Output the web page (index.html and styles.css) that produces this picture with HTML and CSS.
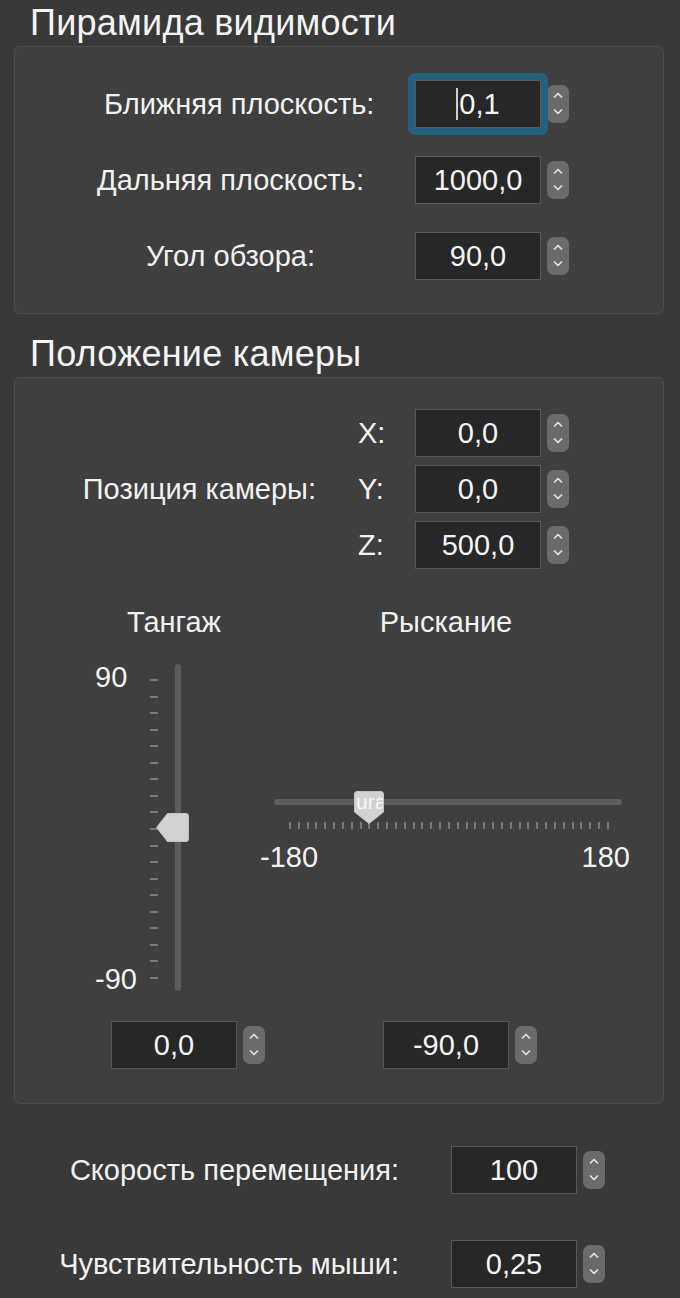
FILE: index.html
```html
<!DOCTYPE html>
<html lang="ru">
<head>
<meta charset="utf-8">
<title>Камера</title>
<link rel="stylesheet" href="styles.css">
</head>
<body>
<main class="panel">
  <h2 class="group-title first">Пирамида видимости</h2>
  <section class="group frustum">
    <label class="form-label near">Ближняя плоскость:</label>
    <div class="spin">
      <div class="field focused"><span class="caret"></span>0,1</div>
      <svg class="stepper" viewBox="0 0 22 38"><path d="M7.5 12 L11 8.5 L14.5 12 M7.5 25 L11 28.5 L14.5 25"/></svg>
    </div>
    <label class="form-label">Дальняя плоскость:</label>
    <div class="spin">
      <div class="field">1000,0</div>
      <svg class="stepper" viewBox="0 0 22 38"><path d="M7.5 12 L11 8.5 L14.5 12 M7.5 25 L11 28.5 L14.5 25"/></svg>
    </div>
    <label class="form-label">Угол обзора:</label>
    <div class="spin">
      <div class="field">90,0</div>
      <svg class="stepper" viewBox="0 0 22 38"><path d="M7.5 12 L11 8.5 L14.5 12 M7.5 25 L11 28.5 L14.5 25"/></svg>
    </div>
  </section>

  <h2 class="group-title second">Положение камеры</h2>
  <section class="group camera">
    <div class="position">
      <label class="form-label pos-label">Позиция камеры:</label>
      <span class="axis">X:</span>
      <div class="spin">
        <div class="field">0,0</div>
        <svg class="stepper" viewBox="0 0 22 38"><path d="M7.5 12 L11 8.5 L14.5 12 M7.5 25 L11 28.5 L14.5 25"/></svg>
      </div>
      <span class="axis">Y:</span>
      <div class="spin">
        <div class="field">0,0</div>
        <svg class="stepper" viewBox="0 0 22 38"><path d="M7.5 12 L11 8.5 L14.5 12 M7.5 25 L11 28.5 L14.5 25"/></svg>
      </div>
      <span class="axis">Z:</span>
      <div class="spin">
        <div class="field">500,0</div>
        <svg class="stepper" viewBox="0 0 22 38"><path d="M7.5 12 L11 8.5 L14.5 12 M7.5 25 L11 28.5 L14.5 25"/></svg>
      </div>
    </div>

    <div class="angles">
      <div class="angle-title">Тангаж</div>
      <div class="angle-title">Рыскание</div>

      <div class="vslider">
        <div class="vlabels"><span>90</span><span>-90</span></div>
        <div class="vticks"></div>
        <div class="vtrack">
          <svg class="vhandle" viewBox="0 0 33 29"><path d="M0.5 14.5 L11.5 0.5 H30 Q32.5 0.5 32.5 3 V26 Q32.5 28.5 30 28.5 H11.5 Z"/></svg>
        </div>
      </div>

      <div class="hslider">
        <div class="htrack">
          <div class="hhandle">
            <svg viewBox="0 0 30 33"><path d="M0.5 3 Q0.5 0.5 3 0.5 H27 Q29.5 0.5 29.5 3 V21 L15 32.5 L0.5 21 Z"/></svg>
            <span class="ghost">ura</span>
          </div>
        </div>
        <div class="hticks"></div>
        <div class="hlabels"><span>-180</span><span>180</span></div>
      </div>

      <div class="spin angle-spin">
        <div class="field">0,0</div>
        <svg class="stepper" viewBox="0 0 22 38"><path d="M7.5 12 L11 8.5 L14.5 12 M7.5 25 L11 28.5 L14.5 25"/></svg>
      </div>
      <div class="spin angle-spin">
        <div class="field">-90,0</div>
        <svg class="stepper" viewBox="0 0 22 38"><path d="M7.5 12 L11 8.5 L14.5 12 M7.5 25 L11 28.5 L14.5 25"/></svg>
      </div>
    </div>
  </section>

  <section class="settings">
    <label class="form-label">Скорость перемещения:</label>
    <div class="spin">
      <div class="field">100</div>
      <svg class="stepper" viewBox="0 0 22 38"><path d="M7.5 12 L11 8.5 L14.5 12 M7.5 25 L11 28.5 L14.5 25"/></svg>
    </div>
    <label class="form-label">Чувствительность мыши:</label>
    <div class="spin">
      <div class="field">0,25</div>
      <svg class="stepper" viewBox="0 0 22 38"><path d="M7.5 12 L11 8.5 L14.5 12 M7.5 25 L11 28.5 L14.5 25"/></svg>
    </div>
  </section>
</main>
</body>
</html>
```

FILE: styles.css
```css
* { box-sizing: border-box; }

html, body {
  margin: 0;
  padding: 0;
  background: #393939;
}

body {
  width: 680px;
  height: 1298px;
  overflow: hidden;
  font-family: "Liberation Sans", Arial, sans-serif;
  font-size: 29px;
  color: #f2f2f2;
}

.panel {
  padding: 3px 16px 0 14px;
}

.group-title {
  margin: 0 0 3px 0;
  padding-left: 16px;
  font-size: 36px;
  letter-spacing: 0.25px;
  font-weight: normal;
  line-height: 40px;
  color: #f4f4f4;
}

.group-title.second {
  margin-top: 20px;
}

.group {
  width: 650px;
  background: #3f3f3f;
  border: 1px solid #4d4d4d;
  border-radius: 6px;
}

.form-label {
  justify-self: end;
  line-height: 32px;
  white-space: nowrap;
}

.spin {
  display: flex;
  align-items: center;
  gap: 6px;
}

.field {
  position: relative;
  width: 126px;
  height: 48px;
  background: #272727;
  border: 1px solid #585858;
  display: flex;
  align-items: center;
  justify-content: center;
  font-size: 29px;
  line-height: 32px;
  color: #f5f5f5;
}

.field.focused::before {
  content: "";
  position: absolute;
  inset: -8px;
  border: 7px solid #25607f;
  border-radius: 7px;
}

.caret {
  display: inline-block;
  width: 0;
  height: 32px;
  border-left: 2px solid #cfcfcf;
  margin-right: 1px;
}

.stepper {
  width: 22px;
  height: 38px;
  background: #6b6b6b;
  border-radius: 7px;
  flex: none;
}

.stepper path {
  fill: none;
  stroke: #e4e4e4;
  stroke-width: 1.7;
  stroke-linecap: round;
  stroke-linejoin: round;
}

.frustum {
  height: 268px;
  display: grid;
  grid-template-columns: 358px auto;
  column-gap: 42px;
  row-gap: 28px;
  align-items: center;
  align-content: start;
  padding-top: 33px;
}

.frustum .form-label {
  justify-self: stretch;
  text-align: center;
  padding-left: 73px;
}

.frustum .form-label.near {
  padding-left: 89px;
}

.camera {
  padding: 31px 0 34px 0;
}

.position {
  display: grid;
  grid-template-columns: 301px 99px auto;
  row-gap: 8px;
  align-items: center;
}

.pos-label {
  grid-row: 1 / span 3;
  grid-column: 1;
  align-self: center;
}

.axis {
  padding-left: 42px;
  line-height: 32px;
}

.angles {
  display: grid;
  grid-template-columns: 168px 352px;
  column-gap: 12px;
  margin: 39px 0 0 75px;
}

.angle-title {
  text-align: center;
  line-height: 28px;
  margin-bottom: 27px;
}

.vslider {
  display: flex;
  height: 330px;
  padding-left: 5px;
}

.vlabels {
  width: 55px;
  display: flex;
  flex-direction: column;
  justify-content: space-between;
  line-height: 28px;
}

.vticks {
  width: 8px;
  height: 300px;
  margin-top: 16px;
  background: repeating-linear-gradient(to bottom, #777 0 2px, transparent 2px 16.556px);
}

.vtrack {
  position: relative;
  width: 6px;
  height: 327px;
  margin: 1px 0 0 17px;
  background: #5d5d5d;
  border-radius: 3px;
}

.vhandle {
  position: absolute;
  left: -19px;
  top: 149px;
  width: 33px;
  height: 29px;
}

.vhandle path,
.hhandle path {
  fill: #d2d2d2;
  stroke: #c4c4c4;
  stroke-width: 1;
}

.hslider {
  padding-top: 128px;
}

.htrack {
  position: relative;
  width: 348px;
  height: 6px;
  margin: 8px 0 0 4px;
  background: #5d5d5d;
  border-radius: 3px;
}

.hhandle {
  position: absolute;
  left: 80px;
  top: -8px;
  width: 30px;
  height: 33px;
}

.hhandle svg {
  display: block;
  width: 30px;
  height: 33px;
}

.ghost {
  position: absolute;
  left: 2px;
  top: 1px;
  width: 27px;
  overflow: hidden;
  font-size: 21px;
  line-height: 20px;
  color: #f7f7f7;
  white-space: nowrap;
}

.hticks {
  width: 320px;
  height: 7px;
  margin: 17px 0 0 19px;
  background: repeating-linear-gradient(to right, #777 0 2px, transparent 2px 8.833px);
}

.hlabels {
  display: flex;
  justify-content: space-between;
  width: 370px;
  margin: 14px 0 0 -10px;
  line-height: 28px;
}

.angle-spin {
  justify-self: center;
  padding-left: 28px;
  margin-top: 28px;
}

.settings {
  display: grid;
  grid-template-columns: 385px auto;
  column-gap: 52px;
  row-gap: 46px;
  align-items: center;
  margin-top: 42px;
}
```
